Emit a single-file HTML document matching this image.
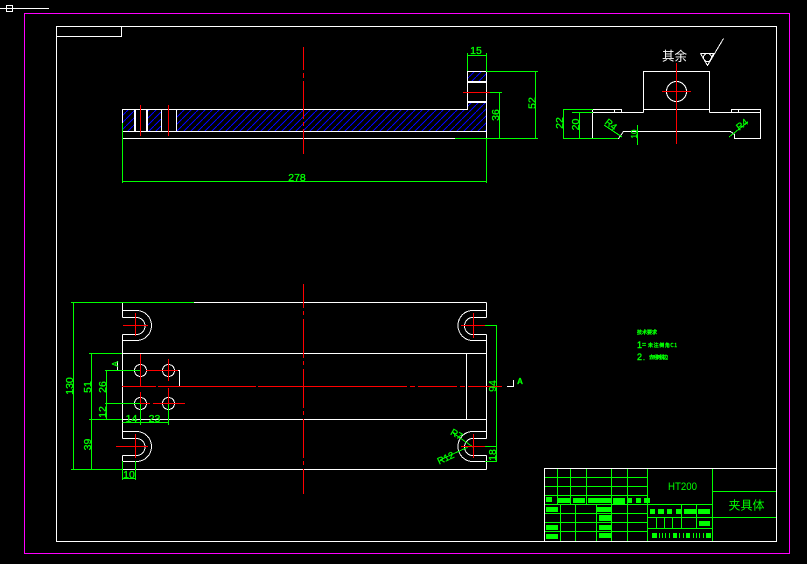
<!DOCTYPE html>
<html>
<head>
<meta charset="utf-8">
<style>
html,body{margin:0;padding:0;background:#000;width:807px;height:564px;overflow:hidden}
svg{display:block}
text{font-family:"Liberation Sans","Noto Sans CJK SC",sans-serif;fill:#00ff00}
.s path,.s circle{shape-rendering:crispEdges}
</style>
</head>
<body>
<svg class="s" width="807" height="564" viewBox="0 0 807 564" xmlns="http://www.w3.org/2000/svg">
<defs>
<pattern id="h" width="7" height="7" patternUnits="userSpaceOnUse">
<path d="M-1 8L8 -1" stroke="#0000ff" stroke-width="1" fill="none" shape-rendering="crispEdges"/>
</pattern>
</defs>
<rect width="807" height="564" fill="#000"/>
<rect x="24.5" y="13.5" width="765" height="540" fill="none" stroke="#ff00ff"/>

<!-- hatch -->
<g fill="url(#h)">
<rect x="123" y="110" width="11" height="21"/>
<rect x="148" y="110" width="13" height="21"/>
<rect x="177" y="110" width="309" height="21"/>
<rect x="468" y="72" width="18" height="9"/>
<rect x="468" y="103" width="18" height="7"/>
</g>

<!-- white geometry -->
<g fill="none" stroke="#fff" stroke-width="1">
<path d="M56.5 26.5H776.5V541.5H56.5Z"/>
<path d="M56.5 36.5H121.5V26.5"/>
<path d="M0 8.5H49M6.5 5.5H12.5V11.5H6.5Z"/>
<!-- top view -->
<path d="M122.5 138.5V109.5H467.5V71.5H486.5V138.5H122.5M122.5 131.5H486.5"/>
<path d="M134.5 109.5V131.5M135.5 109.5V131.5M146.5 109.5V131.5M147.5 109.5V131.5M161.5 109.5V131.5M176.5 109.5V131.5"/>
<path d="M467.5 81.5H486.5M467.5 82.5H486.5M467.5 101.5H486.5M467.5 102.5H486.5"/>
<!-- side view -->
<path d="M643.5 112.5V71.5H709.5V112.5M643.5 109.5H709.5"/>
<path d="M592.5 109.5H621.5V112.5M614.5 109.5V112.5M592.5 112.5H643.5M709.5 112.5H760.5M731.5 112.5V109.5H760.5V138.5H734.5V134.5L730.5 131.5H623.5L618.5 138.5H592.5V109.5M738.5 109.5V112.5"/>
<circle cx="676.5" cy="91.5" r="10"/>
<path d="M700.5 53.5H713.5L707.5 65.5L700.5 53.5M707.5 65.5L723.5 38.5"/>
<circle cx="707.5" cy="57.5" r="4"/>
<!-- plan -->
<path d="M194 302.5H486.5M122.5 469.5H486.5M122.5 302.5V317.5M122.5 334.5V438.5M122.5 455.5V469.5M486.5 302.5V317.5M486.5 334.5V438.5M486.5 455.5V469.5M122.5 302.5H194M122.5 353.5H486.5M122.5 419.5H486.5M466.5 353.5V419.5"/>
<path d="M122.5 310.5H136.5A15 15 0 0 1 136.5 340.5H122.5M122.5 317.5H136.5A8.5 8.5 0 0 1 136.5 334.5H122.5"/>
<path d="M122.5 431.5H136.5A15 15 0 0 1 136.5 461.5H122.5M122.5 438.5H136.5A8.5 8.5 0 0 1 136.5 455.5H122.5"/>
<path d="M486.5 310.5H472.5A14.5 15 0 0 0 472.5 340.5H486.5M486.5 317.5H472.5A8 8.5 0 0 0 472.5 334.5H486.5"/>
<path d="M486.5 431.5H472.5A14.5 15 0 0 0 472.5 461.5H486.5M486.5 438.5H472.5A8 8.5 0 0 0 472.5 455.5H486.5"/>
<circle cx="140.5" cy="370.5" r="6"/>
<circle cx="168.5" cy="370.5" r="6"/>
<circle cx="140.5" cy="403.5" r="6"/>
<circle cx="168.5" cy="403.5" r="6"/>
<path d="M172 370.5H179.5V386M117.5 361V370M507 386.5H513.5V380"/>
</g>

<!-- green dims -->
<g fill="none" stroke="#00ff00" stroke-width="1">
<path d="M467.5 53V71M486.5 53V71M467.5 55.5H486.5"/>
<path d="M486 71.5H538M535.5 71.5V138.5M455 138.5H538M487 92.5H502M499.5 92.5V138"/>
<path d="M122.5 123V183M486.5 139V183M122.5 181.5H486.5"/>
<path d="M563 109.5H593M563 138.5H618M572 112.5H593M563.5 109.5V138.5M579.5 112.5V138.5"/>
<path d="M637.5 125V145M604 125L622 137M729 137L748 122"/>
<path d="M71 302.5H194M71 469.5H123M73.5 302.5V469.5M89 353.5H122M89 419.5H122M91.5 353.5V469.5M105 370.5H140M105 403.5H140M106.5 370.5V419.5"/>
<path d="M122.5 422.5H168.5M140.5 404V425M168.5 404V425"/>
<path d="M122.5 461V480M135.5 461V480M122.5 478.5H135.5"/>
<path d="M485 325.5H497M485 446.5H497M485 461.5H497M496.5 325.5V461.5"/>
<path d="M453 433L473 447M440 460L468 447"/>
</g>

<!-- title block -->
<g fill="none" stroke="#00ff00" stroke-width="1">
<path d="M544 477.5H647M544 486.5H647M544 495.5H647M544 504.5H712M544 513.5H647M544 522.5H647M544 531.5H647"/>
<path d="M557.5 468V504M570.5 468V504M586.5 468V504M611.5 468V504M627.5 468V504"/>
<path d="M560.5 504V541M575.5 504V541M596.5 504V541M611.5 504V541M627.5 504V541"/>
<path d="M647.5 468V541M712.5 468V541M712 491.5H776M712 517.5H776M647 517.5H712M647 528.5H712"/>
<path d="M681.5 504V528M696.5 504V528M656.5 517V528M664.5 517V528M672.5 517V528"/>
</g>
<path d="M544.5 468.5H776.5V541.5H544.5Z" fill="none" stroke="#fff"/>

<g fill="#00ff00">
<rect x="546" y="497" width="6" height="5"/>
<rect x="557" y="498" width="13" height="5"/><rect x="573" y="498" width="12" height="5"/>
<rect x="588" y="498" width="23" height="5"/><rect x="613" y="498" width="12" height="6"/>
<rect x="627" y="498" width="5" height="5"/><rect x="636" y="498" width="5" height="5"/><rect x="644" y="498" width="6" height="5"/>
<rect x="546" y="507" width="12" height="5"/><rect x="546" y="525" width="12" height="5"/><rect x="546" y="534" width="12" height="5"/>
<rect x="597" y="507" width="14" height="5"/><rect x="599" y="515" width="12" height="6"/>
<rect x="599" y="525" width="12" height="5"/><rect x="599" y="533" width="12" height="5"/>
<rect x="650" y="509" width="5" height="5"/><rect x="658" y="509" width="6" height="5"/><rect x="667" y="509" width="5" height="5"/>
<rect x="676" y="509" width="5" height="5"/><rect x="684" y="509" width="12" height="5"/><rect x="698" y="509" width="12" height="5"/>
<rect x="699" y="521" width="11" height="5"/>
<rect x="652" y="533" width="5" height="5"/><rect x="673" y="533" width="4" height="5"/><rect x="686" y="533" width="4" height="5"/><rect x="706" y="533" width="5" height="5"/>
<rect x="659" y="533" width="1" height="5"/><rect x="662" y="533" width="1" height="5"/><rect x="665" y="533" width="1" height="5"/><rect x="669" y="533" width="1" height="5"/>
<rect x="679" y="533" width="1" height="5"/><rect x="683" y="533" width="1" height="5"/>
<rect x="693" y="533" width="1" height="5"/><rect x="696" y="533" width="1" height="5"/><rect x="699" y="533" width="1" height="5"/><rect x="703" y="533" width="1" height="5"/>
</g>

<!-- red centre lines -->
<g fill="none" stroke="#ff0000" stroke-width="1">
<path d="M303.5 47V70M303.5 73V78M303.5 81V119M303.5 122V126M303.5 129V154"/>
<path d="M140.5 105V136M168.5 105V136M463 92.5H490"/>
<path d="M676.5 63V144M662 91.5H691"/>
<path d="M303.5 284V308M303.5 311V315M303.5 319V358M303.5 361V365M303.5 369V408M303.5 411V415M303.5 419V458M303.5 461V465M303.5 469V494"/>
<path d="M122 386.5H156M158 386.5H256M258 386.5H407M410 386.5H415M418 386.5H457M460 386.5H465M468 386.5H502"/>
<path d="M135.5 313V336M123 325.5H148M135.5 434V458M116 446.5H148"/>
<path d="M473.5 313V338M461 325.5H485M473.5 434V458M461 446.5H485"/>
<path d="M140.5 354V386M140.5 392V403M168.5 359V381M168.5 388V403"/>
<path d="M146 370.5H178M140 403.5H150M153 403.5H185"/>
</g>

<!-- labels -->
<g font-size="10.5" stroke="#00ff00" stroke-width="0.3">
<text x="476" y="54" text-anchor="middle">15</text>
<text x="297" y="181" text-anchor="middle">278</text>
<text transform="translate(535.5,103) rotate(-90)" text-anchor="middle">52</text>
<text transform="translate(499,115) rotate(-90)" text-anchor="middle">36</text>
<text transform="translate(563,123) rotate(-90)" text-anchor="middle">22</text>
<text transform="translate(579,124.5) rotate(-90)" text-anchor="middle">20</text>
<text transform="translate(637,134) rotate(-90)" text-anchor="middle" font-size="8">10</text>
<text transform="translate(609,127) rotate(38)" text-anchor="middle" font-size="9.5">R4</text>
<text transform="translate(744,127) rotate(-38)" text-anchor="middle" font-size="9.5">R4</text>
<text transform="translate(73,386) rotate(-90)" text-anchor="middle">130</text>
<text transform="translate(91,387) rotate(-90)" text-anchor="middle">51</text>
<text transform="translate(106,387) rotate(-90)" text-anchor="middle">26</text>
<text transform="translate(106,412) rotate(-90)" text-anchor="middle">12</text>
<text transform="translate(91,444.5) rotate(-90)" text-anchor="middle">39</text>
<text x="131.5" y="422" text-anchor="middle">14</text>
<text x="154.5" y="422" text-anchor="middle">23</text>
<text x="129" y="478" text-anchor="middle">10</text>
<text transform="translate(496,386) rotate(-90)" text-anchor="middle">94</text>
<text transform="translate(496,455) rotate(-90)" text-anchor="middle">18</text>
<text transform="translate(455,437) rotate(30)" text-anchor="middle" font-size="9.5">R7</text>
<text transform="translate(447,461) rotate(-25)" text-anchor="middle" font-size="9.5">R12</text>
<text transform="translate(118,364) rotate(-90)" text-anchor="middle" font-size="8">A</text>
<text x="520" y="384" text-anchor="middle" font-size="8" font-weight="bold">A</text>
</g>
<text x="674.5" y="60.5" text-anchor="middle" font-size="12.5" style="fill:#fff;font-family:'Noto Sans CJK SC',sans-serif">其余</text>
<text x="668" y="490" font-size="11" textLength="29" lengthAdjust="spacingAndGlyphs">HT200</text>
<text x="746.5" y="509.5" text-anchor="middle" font-size="12" style="font-family:'Noto Sans CJK SC',sans-serif">夹具体</text>
<g stroke="#00ff00" stroke-width="0.4">
<text x="637" y="334" font-size="5" textLength="20" style="font-family:'Noto Sans CJK SC',sans-serif">技术要求</text>
<text x="637" y="348" font-size="9">1</text>
<text x="642" y="347" font-size="7">=</text>
<text x="648" y="347" font-size="5" textLength="29" style="font-family:'Noto Sans CJK SC',sans-serif">未注倒角C1</text>
<text x="637" y="360" font-size="9">2</text>
<text x="643" y="360" font-size="7">.</text>
<text x="649" y="359" font-size="5" textLength="19" style="font-family:'Noto Sans CJK SC',sans-serif">去毛刺锐边</text>
</g>
</svg>
</body>
</html>
